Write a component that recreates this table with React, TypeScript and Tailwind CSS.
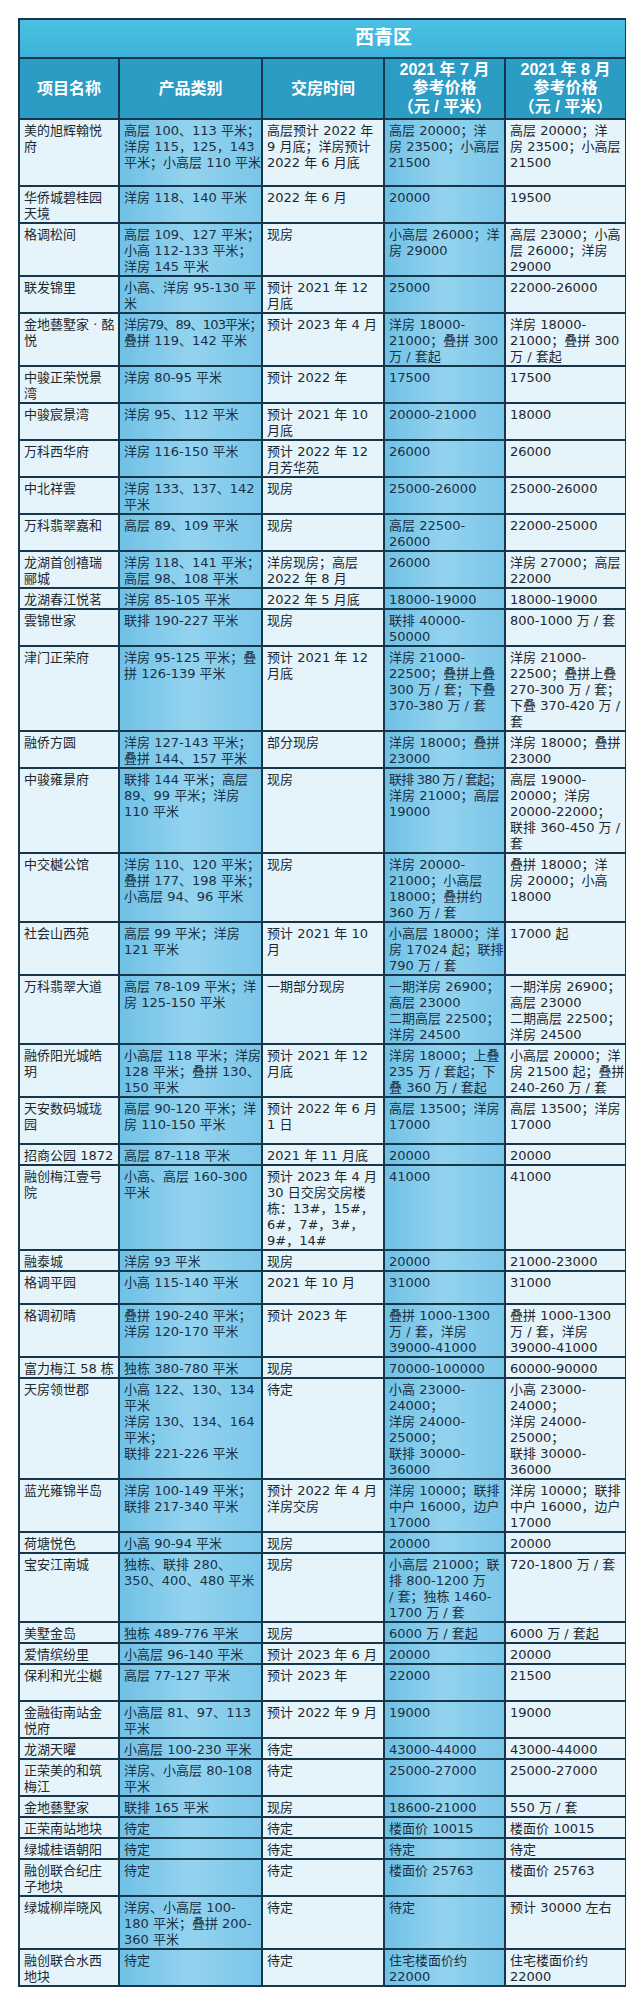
const rows: { c: string[]; cls?: string }[] = [
  { c: ["美的旭辉翰悦|府", "高层 100、113 平米；|洋房 115，125，143|平米；小高层 110 平米", "高层预计 2022 年|9 月底；洋房预计|2022 年 6 月底", "高层 20000；洋|房 23500；小高层|21500", "高层 20000；洋|房 23500；小高层|21500"], cls: "h-[67px]" },
  { c: ["华侨城碧桂园|天境", "洋房 118、140 平米", "2022 年 6 月", "20000", "19500"] },
  { c: ["格调松间", "高层 109、127 平米；|小高 112-133 平米；|洋房 145 平米", "现房", "小高层 26000；洋|房 29000", "高层 23000；小高|层 26000；洋房|29000"] },
  { c: ["联发锦里", "小高、洋房 95-130 平|米", "预计 2021 年 12|月底", "25000", "22000-26000"] },
  { c: ["金地藝墅家 · 酩|悦", "~洋房79、89、103平米；|叠拼 119、142 平米", "预计 2023 年 4 月", "洋房 18000-|21000；叠拼 300|万 / 套起", "洋房 18000-|21000；叠拼 300|万 / 套起"] },
  { c: ["中骏正荣悦景|湾", "洋房 80-95 平米", "预计 2022 年", "17500", "17500"] },
  { c: ["中骏宸景湾", "洋房 95、112 平米", "预计 2021 年 10|月底", "20000-21000", "18000"] },
  { c: ["万科西华府", "洋房 116-150 平米", "预计 2022 年 12|月芳华苑", "26000", "26000"] },
  { c: ["中北祥雲", "洋房 133、137、142|平米", "现房", "25000-26000", "25000-26000"] },
  { c: ["万科翡翠嘉和", "高层 89、109 平米", "现房", "高层 22500-|26000", "22000-25000"] },
  { c: ["龙湖首创禧瑞|郦城", "洋房 118、141 平米；|高层 98、108 平米", "洋房现房；高层|2022 年 8 月", "26000", "洋房 27000；高层|22000"] },
  { c: ["龙湖春江悦茗", "洋房 85-105 平米", "2022 年 5 月底", "18000-19000", "18000-19000"] },
  { c: ["雲锦世家", "联排 190-227 平米", "现房", "联排 40000-|50000", "800-1000 万 / 套"] },
  { c: ["津门正荣府", "洋房 95-125 平米；叠|拼 126-139 平米", "预计 2021 年 12|月底", "洋房 21000-|22500；叠拼上叠|300 万 / 套；下叠|370-380 万 / 套", "洋房 21000-|22500；叠拼上叠|270-300 万 / 套；|下叠 370-420 万 /|套"] },
  { c: ["融侨方圆", "洋房 127-143 平米；|叠拼 144、157 平米", "部分现房", "洋房 18000；叠拼|23000", "洋房 18000；叠拼|23000"] },
  { c: ["中骏雍景府", "联排 144 平米；高层|89、99 平米；洋房|110 平米", "现房", "~联排 380 万 / 套起；|洋房 21000；高层|19000", "高层 19000-|20000；洋房|20000-22000；|联排 360-450 万 /|套"] },
  { c: ["中交樾公馆", "洋房 110、120 平米；|叠拼 177、198 平米；|小高层 94、96 平米", "现房", "洋房 20000-|21000；小高层|18000；叠拼约|360 万 / 套", "叠拼 18000；洋|房 20000；小高|18000"] },
  { c: ["社会山西苑", "高层 99 平米；洋房|121 平米", "预计 2021 年 10|月", "小高层 18000；洋|房 17024 起；联排|790 万 / 套", "17000 起"] },
  { c: ["万科翡翠大道", "高层 78-109 平米；洋|房 125-150 平米", "一期部分现房", "一期洋房 26900；|高层 23000|二期高层 22500；|洋房 24500", "一期洋房 26900；|高层 23000|二期高层 22500；|洋房 24500"] },
  { c: ["融侨阳光城皓|玥", "小高层 118 平米；洋房|128 平米；叠拼 130、|150 平米", "预计 2021 年 12|月底", "洋房 18000；上叠|235 万 / 套起；下|叠 360 万 / 套起", "小高层 20000；洋|房 21500 起；叠拼|240-260 万 / 套"] },
  { c: ["天安数码城珑|园", "高层 90-120 平米；洋|房 110-150 平米", "预计 2022 年 6 月|1 日", "高层 13500；洋房|17000", "高层 13500；洋房|17000"], cls: "h-[47px]" },
  { c: ["招商公园 1872", "高层 87-118 平米", "2021 年 11 月底", "20000", "20000"] },
  { c: ["融创梅江壹号|院", "小高、高层 160-300|平米", "预计 2023 年 4 月|30 日交房交房楼|栋：13#，15#，|6#，7#，3#，|9#，14#", "41000", "41000"] },
  { c: ["融泰城", "洋房 93 平米", "现房", "20000", "21000-23000"] },
  { c: ["格调平园", "小高 115-140 平米", "2021 年 10 月", "31000", "31000"], cls: "h-[33px]" },
  { c: ["格调初晴", "叠拼 190-240 平米；|洋房 120-170 平米", "预计 2023 年", "叠拼 1000-1300|万 / 套，洋房|39000-41000", "叠拼 1000-1300|万 / 套，洋房|39000-41000"] },
  { c: ["富力梅江 58 栋", "独栋 380-780 平米", "现房", "70000-100000", "60000-90000"] },
  { c: ["天房领世郡", "小高 122、130、134|平米|洋房 130、134、164|平米；|联排 221-226 平米", "待定", "小高 23000-|24000；|洋房 24000-|25000；|联排 30000-|36000", "小高 23000-|24000；|洋房 24000-|25000；|联排 30000-|36000"] },
  { c: ["蓝光雍锦半岛", "洋房 100-149 平米；|联排 217-340 平米", "预计 2022 年 4 月|洋房交房", "洋房 10000；联排|中户 16000，边户|17000", "洋房 10000；联排|中户 16000，边户|17000"] },
  { c: ["荷塘悦色", "小高 90-94 平米", "现房", "20000", "20000"] },
  { c: ["宝安江南城", "独栋、联排 280、|350、400、480 平米", "现房", "小高层 21000；联|排 800-1200 万|/ 套；独栋 1460-|1700 万 / 套", "720-1800 万 / 套"] },
  { c: ["美墅金岛", "独栋 489-776 平米", "现房", "6000 万 / 套起", "6000 万 / 套起"] },
  { c: ["爱情缤纷里", "小高层 96-140 平米", "预计 2023 年 6 月", "20000", "20000"] },
  { c: ["保利和光尘樾", "高层 77-127 平米", "预计 2023 年", "22000", "21500"], cls: "h-[37px]" },
  { c: ["金融街南站金|悦府", "小高层 81、97、113|平米", "预计 2022 年 9 月", "19000", "19000"] },
  { c: ["龙湖天曜", "小高层 100-230 平米", "待定", "43000-44000", "43000-44000"] },
  { c: ["正荣美的和筑|梅江", "洋房、小高层 80-108|平米", "待定", "25000-27000", "25000-27000"] },
  { c: ["金地藝墅家", "联排 165 平米", "现房", "18600-21000", "550 万 / 套"] },
  { c: ["正荣南站地块", "待定", "待定", "楼面价 10015", "楼面价 10015"] },
  { c: ["绿城桂语朝阳", "待定", "待定", "待定", "待定"] },
  { c: ["融创联合纪庄|子地块", "待定", "待定", "楼面价 25763", "楼面价 25763"] },
  { c: ["绿城柳岸晓风", "洋房、小高层 100-|180 平米；叠拼 200-|360 平米", "待定", "待定", "预计 30000 左右"] },
  { c: ["融创联合水西|地块", "待定", "待定", "住宅楼面价约|22000", "住宅楼面价约|22000"] },
];

// "~" at the start of a line = squeeze it a little, it is wider than its cell
const Lines = ({ text }: { text: string }) => (
  <>
    {text.split("|").map((line, i) =>
      line.startsWith("~") ? (
        <div key={i} className="whitespace-pre tracking-[-0.8px]">
          {line.slice(1)}
        </div>
      ) : (
        <div key={i} className="whitespace-pre">
          {line}
        </div>
      )
    )}
  </>
);

export default function App() {
  return (
    <div className="min-h-[1996px] bg-white pt-[18px] pl-[18px] font-['DejaVu_Sans','Noto_Sans_CJK_SC',sans-serif]">
      <table className="w-[607px] table-fixed border-collapse border-2 border-[#17364a]">
        <colgroup>
          <col className="w-[100px]" />
          <col className="w-[143px]" />
          <col className="w-[122px]" />
          <col className="w-[121px]" />
          <col className="w-[121px]" />
        </colgroup>
        <thead className="font-['Liberation_Sans','Noto_Sans_CJK_SC',sans-serif]">
          {/* Title bar */}
          <tr className="h-[39px]">
            <th
              colSpan={5}
              className="border-2 border-[#17364a] bg-linear-to-b from-[#4cc0e2] to-[#3cb2da] pl-[122px] text-[19px] font-bold text-white"
            >
              西青区
            </th>
          </tr>
          <tr className="h-[61px]">
            {["项目名称", "产品类别", "交房时间"].map((h) => (
              <th
                key={h}
                className="border-2 border-[#17364a] bg-[#2b9cc4] text-[16px] font-bold text-white"
              >
                {h}
              </th>
            ))}
            {["7", "8"].map((m) => (
              <th
                key={m}
                className="border-2 border-[#17364a] bg-[#2b9cc4] text-[16px] font-bold leading-[18.5px] text-white"
              >
                <div>2021 年 {m} 月</div>
                <div>参考价格</div>
                <div>（元 / 平米）</div>
              </th>
            ))}
          </tr>
        </thead>
        <tbody>
          {rows.map((r, i) => (
            <tr key={i} className={r.cls}>
              {r.c.map((cell, j) => (
                <td
                  key={j}
                  className={`overflow-visible border-2 border-[#17364a] pl-[4px] pr-0 pt-[3px] pb-0 align-top text-[13px] leading-[16px] ${
                    j === 1 || j === 3
                      ? "bg-linear-to-r from-[#6fc1e5] via-[#93d3ef] to-[#7ac6e8] text-[#1a3044]"
                      : "bg-[#e5f4fa] text-[#1d2830]"
                  }`}
                >
                  <Lines text={cell} />
                </td>
              ))}
            </tr>
          ))}
        </tbody>
      </table>
    </div>
  );
}
